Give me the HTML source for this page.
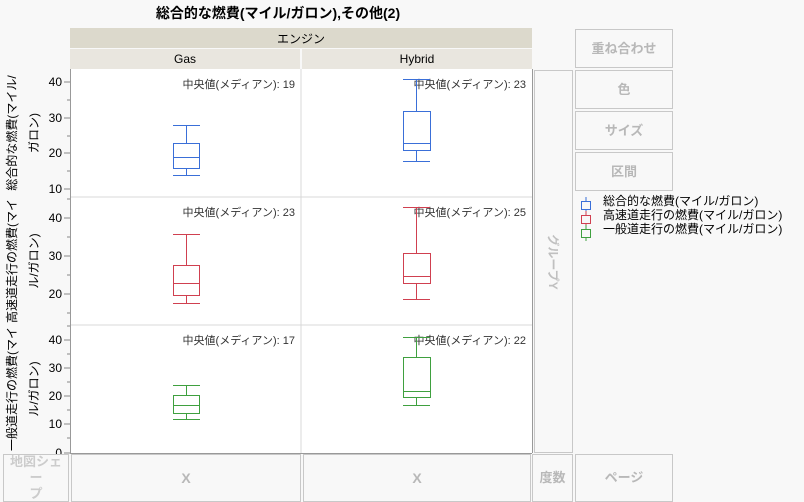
<!DOCTYPE html>
<html><head><meta charset="utf-8"><style>
body{margin:0;width:804px;height:502px;background:#f8f8f8;font-family:"Liberation Sans","Noto Sans CJK JP",sans-serif;overflow:hidden;position:relative}
.btn{position:absolute;border:1px solid #c8c8c8;background:#f8f8f8;color:#b8b8b8;font-weight:bold;font-size:13px;display:flex;align-items:center;justify-content:center;box-sizing:border-box;text-align:center;line-height:16px}
</style></head><body>
<svg width="804" height="502" style="position:absolute;left:0;top:0" font-family="Liberation Sans, Noto Sans CJK JP, sans-serif">
<text x="278" y="18" font-size="14" font-weight="bold" text-anchor="middle" fill="#000">総合的な燃費(マイル/ガロン),その他(2)</text>
<rect x="70" y="28" width="462" height="20" fill="#dcd9cc"/>
<text x="301" y="43" font-size="12" text-anchor="middle" fill="#000">エンジン</text>
<rect x="70" y="49" width="230" height="20" fill="#e9e6df"/>
<rect x="302" y="49" width="230" height="20" fill="#e9e6df"/>
<text x="185" y="63" font-size="12" text-anchor="middle" fill="#000">Gas</text>
<text x="417" y="63" font-size="12" text-anchor="middle" fill="#000">Hybrid</text>
<rect x="70" y="69" width="462" height="384" fill="#fff"/>
<line x1="301" y1="69" x2="301" y2="453" stroke="#d8d8d8"/>
<line x1="70" y1="197" x2="532" y2="197" stroke="#d8d8d8"/>
<line x1="70" y1="325" x2="532" y2="325" stroke="#d8d8d8"/>
<line x1="70.5" y1="69" x2="70.5" y2="453" stroke="#999"/>
<line x1="70" y1="453.5" x2="532" y2="453.5" stroke="#999"/>
<line x1="532.5" y1="69" x2="532.5" y2="453" stroke="#999"/>
<g stroke="#888">
<path d="M64 82h6M64 118h6M64 153h6M64 189h6M67 100h3M67 136h3M67 171h3"/>
<path d="M64 218h6M64 256h6M64 294h6M67 199h3M67 237h3M67 275h3M67 313h3"/>
<path d="M64 340h6M64 368h6M64 396h6M64 424h6M64 453h6M67 326h3M67 354h3M67 382h3M67 410h3M67 438h3"/>
</g>
<g font-size="12" fill="#000" text-anchor="end">
<text x="62" y="86">40</text><text x="62" y="122">30</text><text x="62" y="157">20</text><text x="62" y="193">10</text>
<text x="62" y="222">40</text><text x="62" y="260">30</text><text x="62" y="298">20</text>
<text x="62" y="344">40</text><text x="62" y="372">30</text><text x="62" y="400">20</text><text x="62" y="428">10</text><text x="62" y="457">0</text>
</g>
<g font-size="12" fill="#000" text-anchor="middle">
<text transform="translate(16,133) rotate(-90)">総合的な燃費(マイル/</text>
<text transform="translate(38,133) rotate(-90)">ガロン)</text>
<text transform="translate(16,261) rotate(-90)">高速道走行の燃費(マイ</text>
<text transform="translate(38,261) rotate(-90)">ル/ガロン)</text>
<text transform="translate(16,389) rotate(-90)">一般道走行の燃費(マイ</text>
<text transform="translate(38,389) rotate(-90)">ル/ガロン)</text>
</g>
<g font-size="11" fill="#333" text-anchor="end">
<text x="295" y="88">中央値(メディアン): 19</text><text x="526" y="88">中央値(メディアン): 23</text>
<text x="295" y="216">中央値(メディアン): 23</text><text x="526" y="216">中央値(メディアン): 25</text>
<text x="295" y="344">中央値(メディアン): 17</text><text x="526" y="344">中央値(メディアン): 22</text>
</g>
<g fill="none" stroke-width="1">
<g stroke="#3a6fd8">
<path d="M173 125.5h27M186.5 125v18M173.5 143.5h26v25h-26zM173 157.5h27M186.5 168v7M173 175.5h27"/>
<path d="M403 79.5h27M416.5 79v32M403.5 111.5h27v39h-27zM403 143.5h27M416.5 150v11M403 161.5h27"/>
</g>
<g stroke="#d04050">
<path d="M173 234.5h27M186.5 234v31M173.5 265.5h26v30h-26zM173 283.5h27M186.5 295v8M173 303.5h27"/>
<path d="M403 207.5h27M416.5 207v46M403.5 253.5h27v30h-27zM403 276.5h27M416.5 283v16M403 299.5h27"/>
</g>
<g stroke="#3fa03f">
<path d="M173 385.5h27M186.5 385v10M173.5 395.5h26v18h-26zM173 405.5h27M186.5 413v6M173 419.5h27"/>
<path d="M403 337.5h27M416.5 337v20M403.5 357.5h27v40h-27zM403 391.5h27M416.5 397v8M403 405.5h27"/>
</g>
</g>
<rect x="534.5" y="70.5" width="38" height="382" fill="#f8f8f8" stroke="#c8c8c8"/>
<text transform="translate(549,262) rotate(90)" font-size="12" font-weight="bold" fill="#c0c0c0" text-anchor="middle">グループY</text>
<g font-size="12" fill="#000">
<path d="M586 197v4M586 209v4M581.5 201.5h9v8h-9z" stroke="#3a6fd8" fill="none"/>
<text x="603" y="205">総合的な燃費(マイル/ガロン)</text>
<path d="M586 211v4M586 223v4M581.5 215.5h9v8h-9z" stroke="#d04050" fill="none"/>
<text x="603" y="219">高速道走行の燃費(マイル/ガロン)</text>
<path d="M586 225v4M586 237v4M581.5 229.5h9v8h-9z" stroke="#3fa03f" fill="none"/>
<text x="603" y="233">一般道走行の燃費(マイル/ガロン)</text>
</g>
</svg>
<div class="btn" style="left:575px;top:29px;width:98px;height:39px">重ね合わせ</div>
<div class="btn" style="left:575px;top:70px;width:98px;height:39px">色</div>
<div class="btn" style="left:575px;top:111px;width:98px;height:39px">サイズ</div>
<div class="btn" style="left:575px;top:152px;width:98px;height:39px">区間</div>
<div class="btn" style="left:3px;top:454px;width:66px;height:48px;color:#ccc">地図シェー<br>プ</div>
<div class="btn" style="left:71px;top:454px;width:230px;height:48px;font-size:14px">X</div>
<div class="btn" style="left:303px;top:454px;width:228px;height:48px;font-size:14px">X</div>
<div class="btn" style="left:532px;top:454px;width:41px;height:48px">度数</div>
<div class="btn" style="left:575px;top:454px;width:98px;height:48px">ページ</div>
</body></html>
